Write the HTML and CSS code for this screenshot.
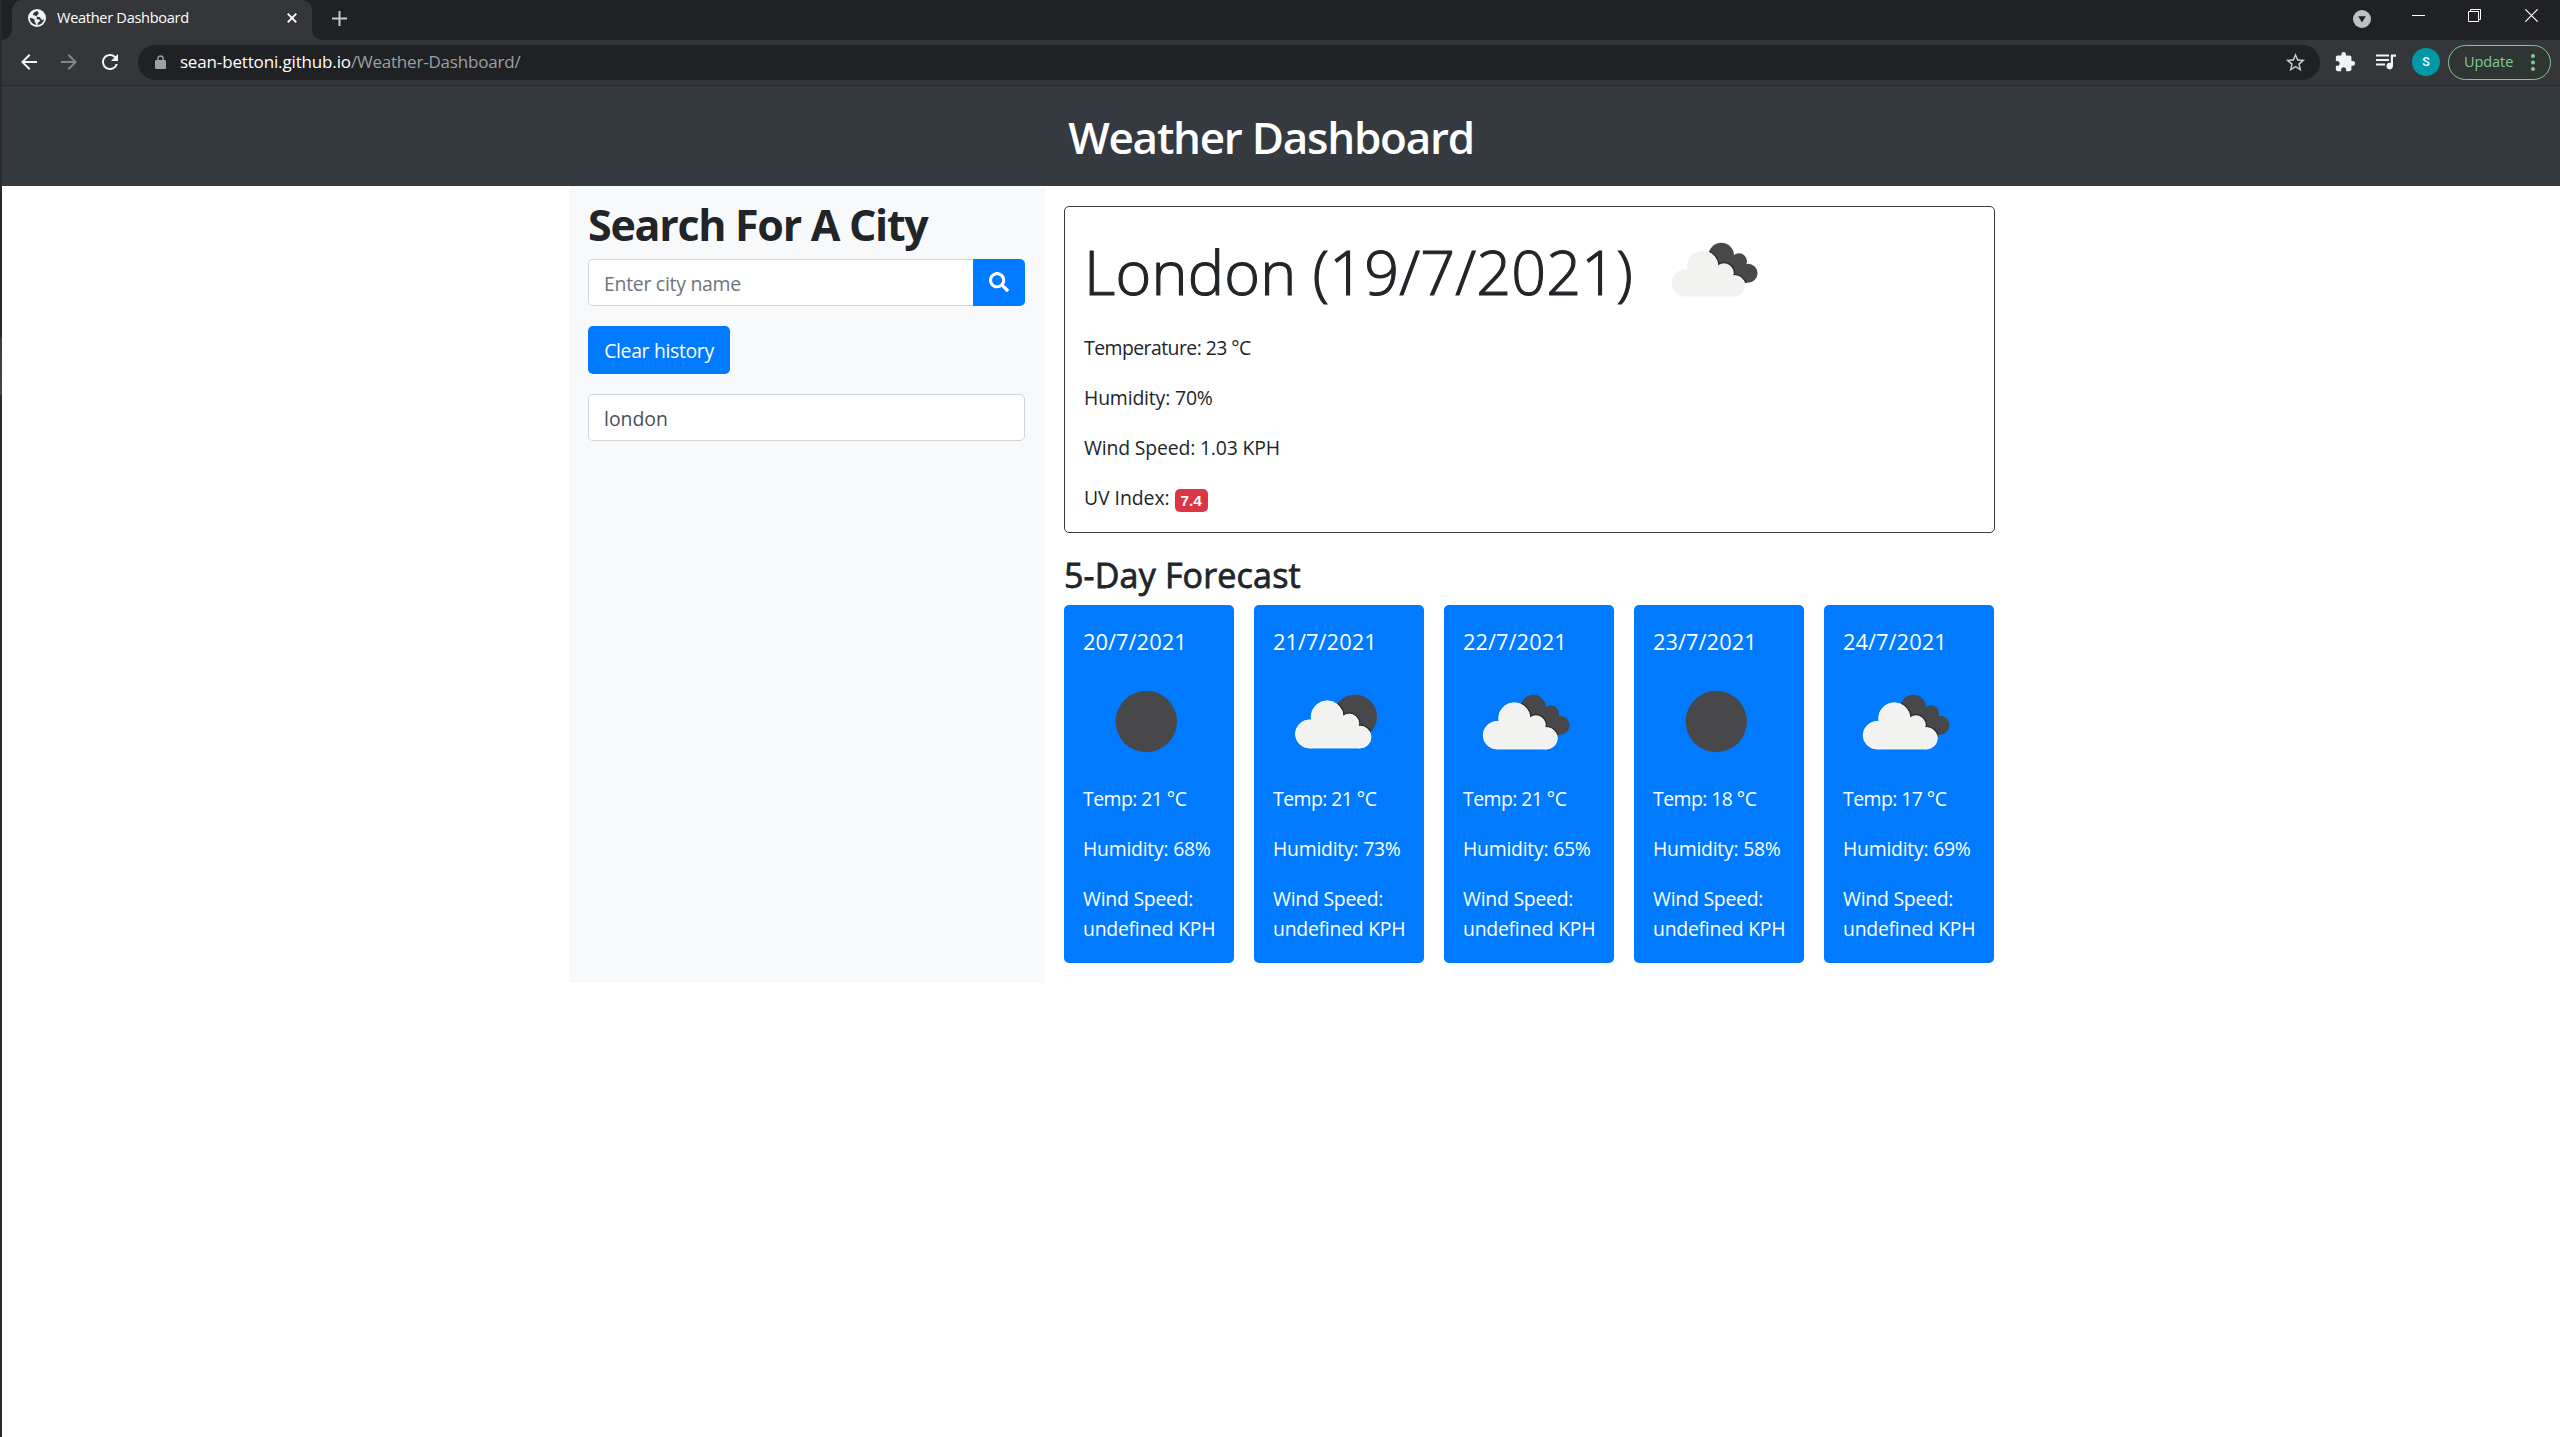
FILE: index.html
```html
<!DOCTYPE html>
<html lang="en">
<head>
<meta charset="utf-8">
<title>Weather Dashboard</title>
<link rel="stylesheet" href="styles.css">
</head>
<body>
<svg class="defs" width="0" height="0" aria-hidden="true">
  <defs>
    <g id="cloud">
      <circle cx="33" cy="76.2" r="13.8"/><circle cx="50.3" cy="59.4" r="15.7"/><circle cx="72" cy="66" r="9.3"/><circle cx="82.6" cy="79.3" r="10.7"/>
      <path d="M33 90V70l17-12 22 5 10.600 10V90z"/>
    </g>
    <g id="dark-cloud">
      <circle cx="69.300" cy="48.400" r="12.700"/><circle cx="87" cy="54.300" r="8"/><circle cx="96" cy="66.200" r="9.500"/>
      <path d="M57 50l12-4 18 4 9 12-1 14H80L62 66z"/>
    </g>
    <clipPath id="dark-cloud-clip">
      <circle cx="69.300" cy="48.400" r="12.700"/><circle cx="87" cy="54.300" r="8"/><circle cx="96" cy="66.200" r="9.500"/>
      <path d="M57 50l12-4 18 4 9 12-1 14H80L62 66z"/>
    </clipPath>
    <clipPath id="disc-clip"><circle cx="81" cy="57.500" r="22"/></clipPath>
    <symbol id="clear" viewBox="0 0 125 125"><circle cx="62.300" cy="62.500" r="30.700" fill="#48484a"/></symbol>
    <symbol id="broken" viewBox="0 0 125 125">
      <use href="#dark-cloud" fill="#48484a"/>
      <g clip-path="url(#dark-cloud-clip)">
        <use href="#cloud" fill="#2c2c2e" stroke="#2c2c2e" stroke-width="3.200"/>
      </g>
      <use href="#cloud" fill="#fff" stroke="#fff" stroke-width=".8"/>
      <use href="#cloud" fill="#f2f2f1" transform="translate(1 1) scale(.983)"/>
    </symbol>
    <symbol id="few" viewBox="0 0 125 125">
      <circle cx="81" cy="57.500" r="22" fill="#48484a"/>
      <g clip-path="url(#disc-clip)">
        <use href="#cloud" fill="#2c2c2e" stroke="#2c2c2e" stroke-width="3.200" transform="translate(1.900 -2.700) scale(1.019)"/>
      </g>
      <g transform="translate(1.900 -2.700) scale(1.019)">
        <use href="#cloud" fill="#fff" stroke="#fff" stroke-width=".8"/>
        <use href="#cloud" fill="#f2f2f1" transform="translate(1 1) scale(.983)"/>
      </g>
    </symbol>
  </defs>
</svg>

<div class="window">
  <div class="tabstrip">
    <div class="tab">
      <svg class="globe" viewBox="0 0 18 18"><circle cx="9" cy="9" r="9" fill="#f1f3f4"/><path d="M9.600 1.900C6.500 2.500 4.400 4.300 5.200 6c.6 1.300 3.100.5 3.700 1.500.6 1.100-.9 1.600-.2 2.500.7.800 2 .1 2.800.700.9.600.6 1.500-.3 2.100-1.100.8-2 1.500-1.700 3.300 3.500-.2 6.200-2.600 6.600-6-.8.9-2.100 1.200-2.900.4-1-.9-.3-2.100-1.600-2.400-1.500-.3-2.700-.2-2.700-1.400 0-1.100 1.600-1 1.700-2.300.1-1-.7-1.500-1-2.500z" fill="#35363a"/><path d="M1.900 8.500c1.200.9 3.400.8 4.500 1.900.9.900-.2 1.600.5 2.600.5.700 1.300 1 1.100 2.900-3.500-.5-6.100-3.600-6.100-7.400z" fill="#35363a"/></svg>
      <span class="tab-title">Weather Dashboard</span>
      <svg class="tab-close" viewBox="0 0 10 10"><path d="M.7.700l8.600 8.600M9.300.700L.7 9.300" stroke="#fff" stroke-width="1.900"/></svg>
    </div>
    <svg class="plus" viewBox="0 0 15 15"><path d="M7.500 0v15M0 7.500h15" stroke="#c4c7cc" stroke-width="2"/></svg>
    <div class="window-controls">
      <svg class="chev" viewBox="0 0 18 18"><circle cx="9" cy="9" r="9" fill="#bdc1c6"/><path d="M5.200 6.200h7.600L9 12.600z" fill="#202124"/></svg>
      <svg class="min" viewBox="0 0 13 13"><path d="M0 6.500h13" stroke="#fff"/></svg>
      <svg class="max" viewBox="0 0 13 13"><path d="M.5 2.500h10v10H.5zM2.500 2.500v-2h10v10h-2" fill="none" stroke="#fff"/></svg>
      <svg class="close" viewBox="0 0 13 13"><path d="M.3.300l12.400 12.400M12.700.300L.3 12.700" stroke="#fff" stroke-width="1.200"/></svg>
    </div>
  </div>

  <div class="toolbar">
    <svg class="nav" viewBox="0 0 24 24" fill="#f1f3f4"><path d="M20 11H7.830l5.590-5.590L12 4l-8 8 8 8 1.410-1.410L7.830 13H20v-2z"/></svg>
    <svg class="nav" viewBox="0 0 24 24" fill="#85868a"><path d="M12 4l-1.410 1.410L16.170 11H4v2h12.170l-5.580 5.590L12 20l8-8z"/></svg>
    <svg class="nav" viewBox="0 0 24 24" fill="#f1f3f4"><path d="M17.650 6.350A7.958 7.958 0 0 0 12 4c-4.420 0-7.990 3.580-7.990 8s3.570 8 7.990 8c3.730 0 6.840-2.550 7.730-6h-2.080A5.990 5.990 0 0 1 12 18c-3.310 0-6-2.690-6-6s2.690-6 6-6c1.660 0 3.140.69 4.220 1.780L13 11h7V4l-2.350 2.350z"/></svg>
    <div class="omnibox">
      <svg class="lock" viewBox="0 0 11 14"><path d="M2.900 6V3.600a2.600 2.600 0 0 1 5.200 0V6" fill="none" stroke="#9aa0a6" stroke-width="1.400"/><rect y="5" width="11" height="9" rx="1.200" fill="#9aa0a6"/></svg>
      <span class="host">sean-bettoni.github.io</span><span class="path">/Weather-Dashboard/</span>
      <svg class="star" viewBox="0 0 24 24" fill="#c4c7cb"><path d="M22 9.240l-7.190-.62L12 2 9.190 8.630 2 9.240l5.460 4.730L5.820 21 12 17.270 18.180 21l-1.630-7.030L22 9.240zM12 15.400l-3.760 2.270 1-4.280-3.320-2.880 4.380-.38L12 6.100l1.710 4.040 4.380.38-3.320 2.880 1 4.280L12 15.400z"/></svg>
    </div>
    <svg class="ext" viewBox="0 0 24 24" fill="#f1f3f4"><path d="M20.500 11H19V7c0-1.100-.9-2-2-2h-4V3.500a2.500 2.500 0 0 0-5 0V5H4c-1.100 0-1.990.9-1.990 2v3.800H3.500c1.490 0 2.700 1.210 2.700 2.700s-1.210 2.700-2.700 2.700H2V20c0 1.100.9 2 2 2h3.800v-1.500c0-1.490 1.210-2.700 2.700-2.700s2.700 1.210 2.700 2.700V22H17c1.100 0 2-.9 2-2v-4h1.500a2.500 2.500 0 0 0 0-5z"/></svg>
    <svg class="queue" viewBox="0 0 20 16" fill="#f1f3f4"><path d="M0 .5h13v2H0zM0 5h13v2H0zM0 9.500h9v2H0zM14.800.500H20v2.200h-3V12a3.300 3.300 0 1 1-2.200-3.100z"/></svg>
    <div class="avatar">S</div>
    <div class="update"><span>Update</span><svg viewBox="0 0 4 17" fill="#81c995"><circle cx="2" cy="2" r="2"/><circle cx="2" cy="8.500" r="2"/><circle cx="2" cy="15" r="2"/></svg></div>
  </div>

  <div class="viewport">
    <header class="header"><h1>Weather Dashboard</h1></header>
    <div class="container">
      <aside class="sidebar">
        <h2>Search For A City</h2>
        <div class="search">
          <div class="field placeholder">Enter city name</div>
          <button class="go" aria-label="Search"><svg viewBox="0 0 512 512" fill="#fff"><path d="M505 442.700L405.300 343c-4.500-4.500-10.600-7-17-7H372c27.600-35.300 44-79.700 44-128C416 93.100 322.900 0 208 0S0 93.100 0 208s93.100 208 208 208c48.300 0 92.700-16.400 128-44v16.300c0 6.400 2.500 12.500 7 17l99.700 99.700c9.400 9.400 24.600 9.400 33.900 0l28.300-28.300c9.400-9.400 9.400-24.600.1-34zM208 336c-70.700 0-128-57.200-128-128 0-70.700 57.200-128 128-128 70.700 0 128 57.200 128 128 0 70.700-57.200 128-128 128z"/></svg></button>
        </div>
        <button class="clear">Clear history</button>
        <div class="field history">london</div>
      </aside>
      <main class="main">
        <section class="current">
          <div class="city-row"><h2>London (19/7/2021)</h2><svg class="weather"><use href="#broken"/></svg></div>
          <p class="deg">Temperature: 23 °C</p>
          <p>Humidity: 70%</p>
          <p>Wind Speed: 1.03 KPH</p>
          <p class="uv">UV Index: <span class="badge">7.4</span></p>
        </section>
        <h3>5-Day Forecast</h3>
        <section class="days">
          <article class="day"><h4>20/7/2021</h4><svg class="weather"><use href="#clear"/></svg><p class="deg">Temp: 21 °C</p><p>Humidity: 68%</p><p>Wind Speed:<br>undefined KPH</p></article>
          <article class="day"><h4>21/7/2021</h4><svg class="weather"><use href="#few"/></svg><p class="deg">Temp: 21 °C</p><p>Humidity: 73%</p><p>Wind Speed:<br>undefined KPH</p></article>
          <article class="day"><h4>22/7/2021</h4><svg class="weather"><use href="#broken"/></svg><p class="deg">Temp: 21 °C</p><p>Humidity: 65%</p><p>Wind Speed:<br>undefined KPH</p></article>
          <article class="day"><h4>23/7/2021</h4><svg class="weather"><use href="#clear"/></svg><p class="deg">Temp: 18 °C</p><p>Humidity: 58%</p><p>Wind Speed:<br>undefined KPH</p></article>
          <article class="day"><h4>24/7/2021</h4><svg class="weather"><use href="#broken"/></svg><p class="deg">Temp: 17 °C</p><p>Humidity: 69%</p><p>Wind Speed:<br>undefined KPH</p></article>
        </section>
      </main>
    </div>
  </div>
</div>
</body>
</html>
```
FILE: styles.css
```css
* { box-sizing: border-box; }
body {
  margin: 0;
  font: 19.4px/30px "Open Sans", "Noto Sans", sans-serif;
  letter-spacing: -0.16px;
  color: #212529;
  background: #fff;
}
h1, h2, h3, h4, p { margin: 0; white-space: nowrap; }
svg { display: block; flex: none; }
button { font: inherit; letter-spacing: inherit; border: 0; margin: 0; padding: 0; }
.defs { position: absolute; }

.window {
  height: 1437px;
  padding-left: 2px;
  background: linear-gradient(#28292b 337px, #3c3c3d 337px, #444 395px, #2b2b2c 395px);
  display: flex;
  flex-direction: column;
  overflow: hidden;
}

/* Browser chrome */
.tabstrip { height: 40px; background: #202124; display: flex; align-items: flex-start; padding-left: 10px; }
.tab {
  position: relative;
  width: 300px;
  height: 40px;
  padding: 0 15px 4px 16px;
  display: flex;
  align-items: center;
  background: #35363a;
  border-radius: 10px 10px 0 0;
}
.tab::before, .tab::after {
  content: "";
  position: absolute;
  bottom: 0;
  width: 10px;
  height: 10px;
}
.tab::before { left: -10px; background: radial-gradient(circle at 0 0, transparent 9.5px, #35363a 10px); }
.tab::after { right: -10px; background: radial-gradient(circle at 100% 0, transparent 9.5px, #35363a 10px); }
.globe { width: 18px; height: 18px; }
.tab-title { margin-left: 11px; padding-bottom: 2px; font-size: 14.55px; letter-spacing: -0.29px; color: #fff; }
.tab-close { width: 10px; height: 10px; margin-left: auto; }
.plus { width: 15px; height: 15px; margin: 11px 0 0 20px; }
.window-controls { margin-left: auto; display: flex; align-items: flex-start; padding-right: 22px; }
.chev { width: 18px; height: 18px; margin: 10px 41px 0 0; }
.min, .max, .close { width: 13px; height: 13px; margin-top: 9px; }
.min { margin-right: 43px; }
.max { margin-right: 44px; }

.toolbar {
  height: 46px;
  background: #35363a;
  border-bottom: 1px solid #27292b;
  display: flex;
  align-items: center;
  padding: 0 9px 1px 15px;
}
.nav { width: 24px; height: 24px; margin-right: 16.3px; }
.omnibox {
  flex: 1;
  height: 35px;
  margin-right: 15px;
  padding: 0 13px 0 17px;
  border-radius: 18px;
  background: #202124;
  display: flex;
  align-items: center;
  font-size: 17px;
}
.lock { width: 11px; height: 14px; margin-right: 14px; }
.host { color: #fff; letter-spacing: -0.15px; }
.path { color: #9aa0a6; letter-spacing: -0.2px; }
.star { width: 23px; height: 23px; margin-left: auto; }
.ext { width: 22px; height: 22px; margin: 0 20px 1px -1px; }
.queue { width: 20px; height: 16px; margin: 0 16px 1px 0; }
.avatar {
  width: 28px;
  height: 28px;
  margin-right: 8px;
  border-radius: 50%;
  background: #0097a7;
  color: #fff;
  font: 500 12.5px/28px Roboto, sans-serif;
  text-align: center;
}
.update {
  width: 103px;
  height: 35px;
  padding: 0 15px 0 15px;
  border: 1px solid #81c995;
  border-radius: 18px;
  background: #2e3533;
  color: #81c995;
  font-size: 14.55px;
  letter-spacing: -0.1px;
  display: flex;
  align-items: center;
  justify-content: space-between;
}
.update span { padding-bottom: 2px; }
.update svg { width: 4px; height: 17px; }

/* Page */
.viewport { flex: 1; background: #fff; }
.header {
  height: 100px;
  padding: 2px 20px 0 0;
  background: #343a40;
  display: flex;
  align-items: center;
  justify-content: center;
}
.header h1 { font-size: 44px; font-weight: 600; letter-spacing: -1.25px; color: #fff; }
.container { width: 1426px; margin-left: 567px; display: flex; }
.sidebar {
  width: 475px;
  padding: 0 19px;
  background: #f8f9fa;
  display: flex;
  flex-direction: column;
  align-items: flex-start;
}
.sidebar h2 { height: 73px; padding-top: 2px; font-size: 43px; line-height: 73px; font-weight: 700; letter-spacing: -1.3px; }
.search { display: flex; width: 437px; margin-bottom: 20px; }
.field {
  width: 437px;
  height: 47px;
  padding: 1px 15px 0;
  line-height: 45px;
  border: 1px solid #ced4da;
  border-radius: 5px;
  background: #fff;
}
.placeholder { flex: 1; color: #6c757d; letter-spacing: -0.26px; border-right: 0; border-radius: 5px 0 0 5px; }
.go { width: 52px; height: 47px; background: #007bff; border-radius: 0 5px 5px 0; padding-left: 16px; }
.go svg { width: 20px; height: 20px; margin-top: -2px; }
.clear {
  height: 48px;
  width: 142px;
  margin-bottom: 20px;
  padding-top: 2px;
  background: #007bff;
  color: #fff;
  border-radius: 5px;
  letter-spacing: -0.33px;
}
.history { color: #495057; letter-spacing: 0; }

.sidebar { width: 476px; }
.main { flex: 1; padding: 20px 0 20px 19px; }
.current { width: 931px; height: 327px; border: 1px solid #343a40; border-radius: 5px; padding: 0 19px; }
.current p, .day p { margin-bottom: 20px; }
.deg { letter-spacing: -0.54px; }
.city-row { height: 126px; padding-bottom: 1px; display: flex; align-items: center; gap: 19px; }
.city-row h2 { width: 549px; padding-top: 4px; font-size: 61px; font-weight: 300; line-height: 75px; letter-spacing: 0.2px; -webkit-text-stroke: 1.1px #212529; }
.weather { width: 125px; height: 125px; }
.uv { display: flex; align-items: center; gap: 5px; letter-spacing: -0.05px; }
.badge {
  width: 33px;
  height: 23px;
  margin-top: 4px;
  border-radius: 5px;
  background: #dc3545;
  color: #fff;
  font: 700 15.5px/24px "Liberation Sans", Arial, sans-serif;
  text-align: center;
}
.main h3 { height: 72px; padding-top: 12px; font-size: 34px; font-weight: 500; line-height: 61px; letter-spacing: 0.18px; -webkit-text-stroke: 0.8px #212529; }
.days { display: flex; gap: 20px; }
.day { width: 170px; height: 358px; flex: none; padding: 0 0 0 19px; border-radius: 5px; background: #007bff; color: #fff; }
.day .weather { margin-left: 1px; }
.day p { letter-spacing: -0.24px; }
.day .deg { letter-spacing: -0.54px; }
.day h4 { height: 53.5px; padding-top: 21px; font-size: 21.8px; font-weight: 400; line-height: 31px; letter-spacing: 0.05px; }
```
